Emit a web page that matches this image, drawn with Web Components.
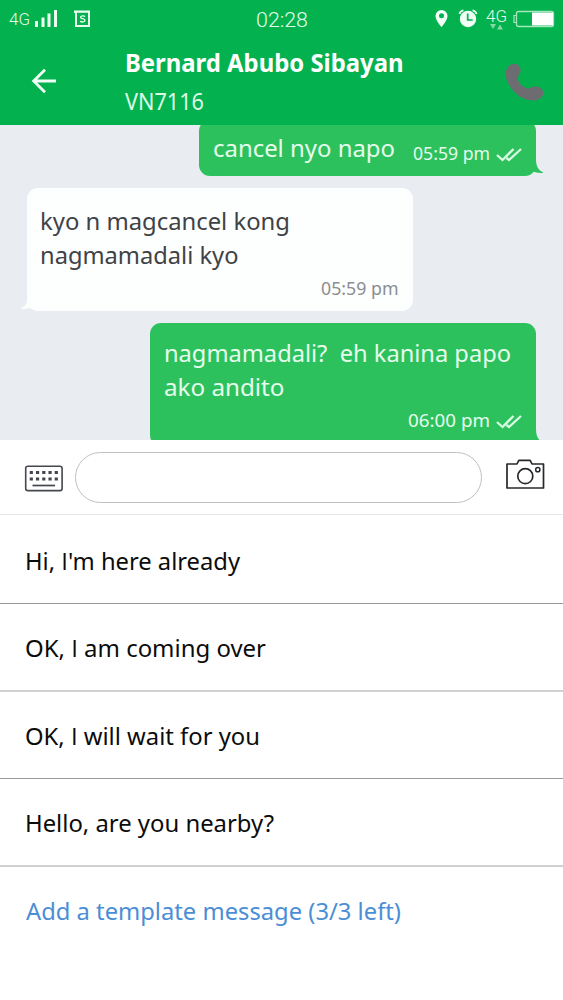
<!DOCTYPE html>
<html lang="en">
<head>
<meta charset="utf-8">
<title>Chat</title>
<style>
html,body{margin:0;padding:0;background:#fff}
body{font-family:"Noto Sans","Liberation Sans",sans-serif;width:563px;height:1000px;overflow:hidden}
</style>
</head>
<body>
<chat-screen></chat-screen>
<script>
const define = (name, html, ready) => customElements.define(name, class extends HTMLElement {
  connectedCallback() {
    if (this.shadowRoot) return;
    this.attachShadow({mode: 'open'}).innerHTML = html;
    if (ready) ready(this, this.shadowRoot);
  }
});

/* One line of text, condensed or widened to the width given in "w". */
define('text-run', `<style>
:host{display:block;white-space:pre;flex:none}
b{display:inline-block;font-weight:inherit;transform-origin:0 50%;white-space:pre}
::slotted(span){font-family:"Open Sans",sans-serif}
</style><b><slot></slot></b>`, (el, root) => {
  const w = +el.getAttribute('w'), b = root.querySelector('b');
  el.style.width = w + 'px';
  const fit = () => {
    b.style.transform = 'none';
    const n = b.getBoundingClientRect().width;
    if (n) b.style.transform = `scaleX(${w / n})`;
  };
  fit();
  requestAnimationFrame(fit);
});

define('status-bar', `<style>
:host{display:grid;grid-template-columns:1fr auto 1fr;height:38px;color:#e2fbe9;font-family:Roboto,sans-serif}
div{display:flex;align-items:flex-start}
.l{padding-left:8.500px}
.r{justify-content:flex-end;padding-right:9.500px}
svg{display:block;flex:none}
.g{font-size:17.3px;line-height:20px;font-weight:300}
.l .g{margin-top:8.500px}
.r .g{height:20px;margin-top:6px}
.time{font-size:20px;line-height:24px;font-weight:300;margin-top:7.5px}
</style>
<div class="l"><text-run class="g" w="21">4G</text-run>
<svg width="60" height="38" fill="#eafff0" style="margin-left:5.500px"><path d="M0 21h3v6H0zM6.500 17.500h3V27h-3zM12.500 13.500h3V27h-3zM19 10h3v17h-3z"/><path d="M39 10.500h16V27H40V13h-1zM42 12.800v12.200h11V12.800z" fill-rule="evenodd"/><path d="M50 16.500c-1-1-4.500-1-4.500 .8s4.500 1 4.500 3-3.500 2.200-4.800.7" fill="none" stroke="#eafff0" stroke-width="1.300"/></svg></div>
<text-run class="time" w="52">02:28</text-run>
<div class="r">
<svg width="13" height="38"><path d="M6.500 10a6 6 0 0 0-6 6c0 4.500 6 11 6 11s6-6.500 6-11a6 6 0 0 0-6-6zm0 3.200a2.500 2.500 0 1 1 0 5 2.500 2.500 0 0 1 0-5z" fill="#f4fff7" fill-rule="evenodd"/></svg>
<svg width="20" height="38" style="margin-left:10.500px;margin-right:8px"><circle cx="10" cy="19" r="8.200" fill="#f0fff4"/><path d="M9.700 13.500V20h5" fill="none" stroke="#03b24f" stroke-width="1.700"/><path d="M1.500 14q.5-3 4-3.700M18.500 14q-.5-3-4-3.700" fill="none" stroke="#e2fbe9" stroke-width="1.800"/></svg>
<div style="display:block;width:21px"><text-run class="g" w="21">4G</text-run><svg width="21" height="6" viewBox="0 0 21 6" style="margin-top:-2px" fill="#84d9a4"><path d="M4 0h6L7 5zM11 5.500h6l-3-5z"/></svg></div>
<svg width="42" height="38" style="margin-left:5.500px;margin-right:-1px"><rect x="3.500" y="11.500" width="37" height="15" rx="2" fill="none" stroke="#a6e6bd" stroke-width="1.300"/><path d="M3 15.500H1v7h2" fill="none" stroke="#a6e6bd" stroke-width="1.200"/><path d="M19 12.500h21v13H19z" fill="#fff"/></svg>
</div>`);

define('chat-header', `<style>
:host{display:block;height:125px;background:#03b24f;color:#fff;position:relative;z-index:1}
.bar{display:flex;height:87px}
.back{margin:29px 0 0 31px;flex:none}
.who{flex:1;margin-left:67px}
.name{font-weight:700;font-size:24.500px;line-height:36px;margin-top:6.500px}
.code{font-size:23.500px;line-height:36px;color:#dcfae6;margin-top:2.500px}
.call{margin:24.500px 18px 0 0;flex:none}
</style>
<status-bar></status-bar>
<div class="bar">
<svg class="back" width="27" height="28" fill="none" stroke="#f2fff6" stroke-width="2.800"><path d="M25 14H3M14 2.800 2.700 14 14 25.200"/></svg>
<div class="who"><text-run class="name" w="278.500">Bernard Abubo Sibayan</text-run><text-run class="code" w="79">VN7116</text-run></div>
<svg class="call" width="40" height="40" viewBox="0 0 40 40"><path d="M3.500 3.500C6 .3 10.500-.2 13 2c3 2.600 3.300 6 1.700 8.500-1.700 2.500-2.400 4.500-1.400 7 1.500 4 4.700 6.600 8.500 7.700 3 .8 4.200-1.200 7.200-1.700 4.500-.7 9 1.800 9.200 6 .2 5-4.400 8-9.700 8-7.500 0-14-3-19.500-9S.8 16 .6 11.500C.5 8 1.500 5.700 3.500 3.500z" fill="#6d6c70"/></svg>
</div>`);

define('message-bubble', `<style>
:host{display:block;position:relative;box-sizing:border-box;flex:none;border-radius:11px;background:#2dc15e;color:#e6fdec;font-size:24px;line-height:33.500px;padding:13px 14px 13px 13.500px;margin-right:27px;align-self:flex-end}
:host([from=them]){background:#fdfefe;color:#404246;align-self:flex-start;margin:0 0 0 27px;padding:16px 14.500px 10px 13px}
:host([inline]){display:flex;padding:10.700px 14px 0 14px}
.meta{display:flex;justify-content:flex-end;font-size:18.600px;line-height:26px;margin-top:4px}
:host([inline]) .meta{margin:9.200px 0 0 auto}
:host([from=them]) .meta{color:#8b8d90}
.ticks{margin:7px 0 0 6.500px;flex:none}
.tail{position:absolute;right:-7.500px;bottom:1.500px}
:host([from=them]) .tail{right:auto;left:-7px;bottom:0;transform:scaleX(-1)}
:host([from=them]) .ticks{display:none}
</style>
<slot></slot>
<div class="meta"><slot name="time"></slot><svg class="ticks" width="26" height="16" fill="none" stroke="#d9fbe3" stroke-width="2.300"><path d="M1 8 6.500 13 17.500 2M10.500 11 13 13 25 2"/></svg></div>
<svg class="tail" width="20" height="18"><path d="M0 2h12c0 7 2 11 7.500 13.700Q14 16.500 9 14.500L0 16z"/></svg>`, (el, root) => {
  root.querySelector('.tail path').setAttribute('fill', el.getAttribute('from') === 'them' ? '#fdfefe' : '#2dc15e');
});

define('chat-log', `<style>
:host{display:flex;flex-direction:column;height:315px;overflow:hidden;background:#e9ecf0}
</style>
<message-bubble inline style="width:337px;height:56px;margin-top:-5px">
<text-run w="182">cancel nyo napo</text-run><text-run slot="time" w="77">05:59 pm</text-run></message-bubble>
<message-bubble from="them" style="width:386px;height:123px;margin-top:12px">
<text-run w="250">kyo n magcancel kong</text-run><text-run w="198.500">nagmamadali kyo</text-run><text-run slot="time" w="77.500">05:59 pm</text-run></message-bubble>
<message-bubble style="width:386px;height:123px;margin-top:12px">
<text-run w="347">nagmamadali?  eh kanina papo</text-run><text-run w="120.500">ako andito</text-run><text-run slot="time" w="82">06:00 pm</text-run></message-bubble>`);

define('chat-composer', `<style>
:host{display:flex;box-sizing:border-box;height:75px;border-bottom:1px solid #e4e6e9;background:#fff}
svg{flex:none}
.keys{margin:24.500px 0 0 24px}
.field{width:406.500px;height:50.500px;box-sizing:border-box;border:1.500px solid #c1c1c1;border-radius:26px;margin:12.300px 0 0 12px}
.cam{margin:18.500px 0 0 24px}
</style>
<svg class="keys" width="39" height="27" fill="none" stroke="#44474d"><rect x="1.700" y="1.200" width="36.400" height="24.400" rx="2.200" stroke-width="1.600"/><path d="M5.700 7.500H35.500M5.700 14H35.500" stroke-width="3.200" stroke-dasharray="3.200 3.050"/><path d="M8.500 20.500H31" stroke-width="1.700"/></svg>
<div class="field"></div>
<svg class="cam" width="40" height="32" fill="none" stroke="#26282b" stroke-width="1.700"><path d="M2 5h9l1.800-3.700h11.400L26 5h11.500v24H1V5z" stroke-linejoin="round"/><circle cx="19.300" cy="17.200" r="7.500"/><circle cx="31.800" cy="10.700" r="2.100" stroke-width="1.500"/></svg>`);

define('reply-option', `<style>
:host{display:block;box-sizing:border-box;padding-left:24.500px;color:#0c0c0c;font-size:24px;line-height:40px;border-bottom:1px solid #999}
:host([soft]){border-bottom:2px solid #d0d0d0}
:host([action]){color:#4b8ed5;border:0}
</style><slot></slot>`);

define('chat-screen', `<style>
:host{display:flex;flex-direction:column;width:563px;height:1000px;background:#fff}
:host>*{flex:none}
</style>
<chat-header></chat-header><chat-log></chat-log><chat-composer></chat-composer>
<reply-option style="height:89px;padding-top:26px"><text-run w="215">Hi, <span>I</span>'m here already</text-run></reply-option>
<reply-option soft style="height:88px;padding-top:24px"><text-run w="241">OK, <span>I</span> am coming over</text-run></reply-option>
<reply-option style="height:87px;padding-top:23.700px"><text-run w="235">OK, <span>I</span> will wait for you</text-run></reply-option>
<reply-option soft style="height:88px;padding-top:24px"><text-run w="249">Hello, are you nearby?</text-run></reply-option>
<reply-option action style="padding-top:23.700px"><text-run w="375" style="margin-left:1px">Add a template message (3/3 left)</text-run></reply-option>`);
</script>
</body>
</html>
